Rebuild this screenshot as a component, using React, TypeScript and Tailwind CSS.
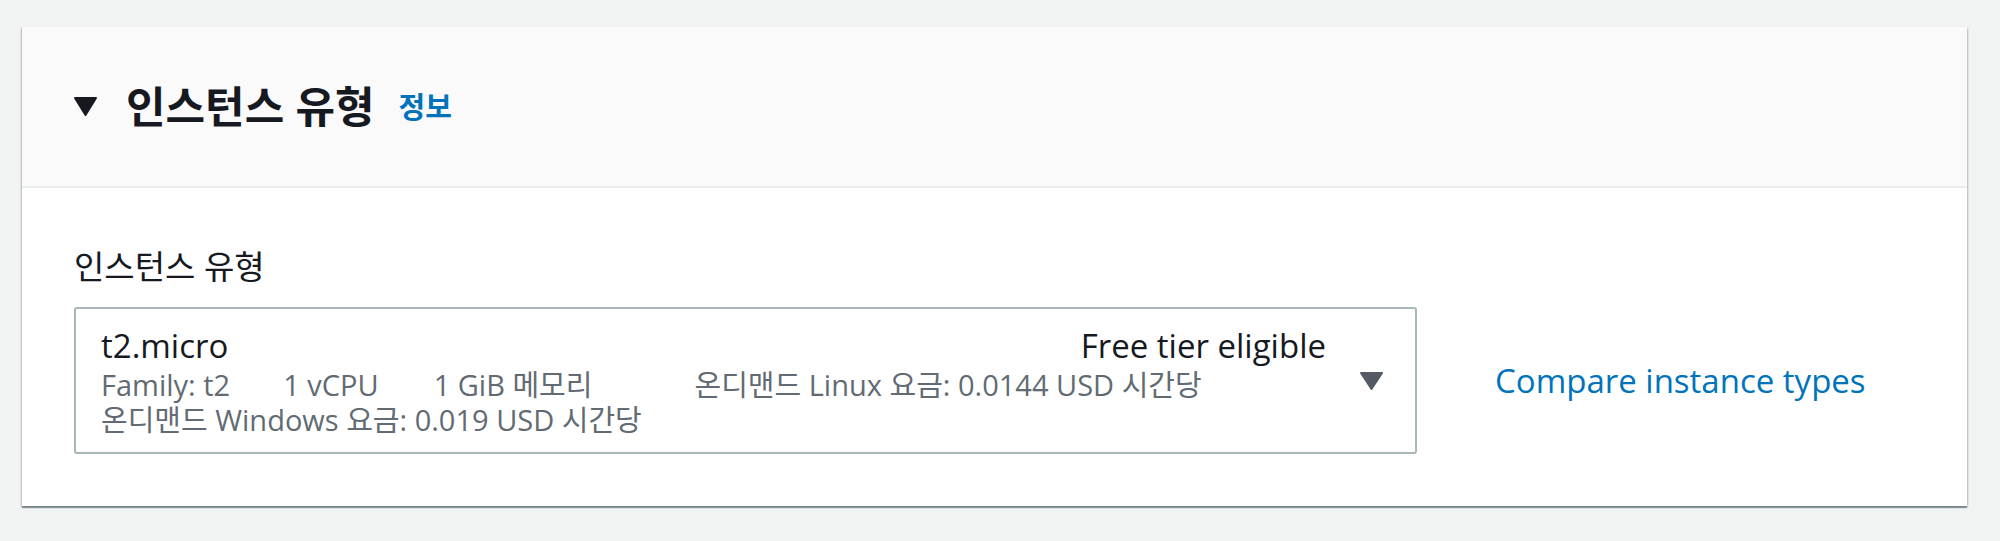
export default function App() {
  return (
    <div className="min-h-[541px] bg-[#f2f3f3] pt-[27px] pl-[22px] pr-[33px] font-['Open_Sans','Noto_Sans_CJK_KR',sans-serif]">
      <div className="bg-white shadow-[0_2px_1px_0_rgba(0,28,36,0.35),1px_1px_2px_0_rgba(0,28,36,0.2),-1px_1px_2px_0_rgba(0,28,36,0.2)]">
        {/* header */}
        <div className="h-[161px] bg-[#fafafa] border-b-2 border-[#eaeded] flex items-center pl-[51px]">
          <svg width="25" height="21" viewBox="0 0 25 21">
            <path d="M2 2 H23 L12.5 19 Z" fill="#16191f" stroke="#16191f" strokeWidth="2" strokeLinejoin="round" />
          </svg>
          <h2 className="ml-[28px] text-[43px] leading-none font-bold text-[#16191f]">인스턴스 유형</h2>
          <span className="ml-[24px] text-[29px] leading-none font-bold text-[#0073bb]">정보</span>
        </div>

        {/* body */}
        <div className="pt-[59px] pb-[52px] pl-[52px]">
          <div className="text-[33px] leading-[40px] text-[#16191f]">인스턴스 유형</div>
          <div className="mt-[20px] flex items-center">
            <div className="w-[1343px] h-[147px] border-2 border-[#aab7b8] rounded-[3px] flex items-center pl-[25px] pr-[31px]">
              <div className="flex-1">
                <div className="flex justify-between text-[33px] leading-[42px] text-[#16191f]">
                  <span>t2.micro</span>
                  <span>Free tier eligible</span>
                </div>
                <div className="text-[29px] leading-[35px] text-[#626b73]">
                  <div className="flex">
                    <span className="mr-[53px]">Family: t2</span>
                    <span className="mr-[55px]">1 vCPU</span>
                    <span className="mr-[102px]">1 GiB 메모리</span>
                    <span>온디맨드 Linux 요금: 0.0144 USD 시간당</span>
                  </div>
                  <div>온디맨드 Windows 요금: 0.019 USD 시간당</div>
                </div>
              </div>
              <svg width="25" height="20" viewBox="0 0 25 20" className="ml-[33px]">
                <path d="M2 2 H23 L12.5 18 Z" fill="#545b64" stroke="#545b64" strokeWidth="2" strokeLinejoin="round" />
              </svg>
            </div>
            <a href="#" className="ml-[78px] text-[33px] leading-[42px] text-[#0073bb]">
              Compare instance types
            </a>
          </div>
        </div>
      </div>
    </div>
  );
}
